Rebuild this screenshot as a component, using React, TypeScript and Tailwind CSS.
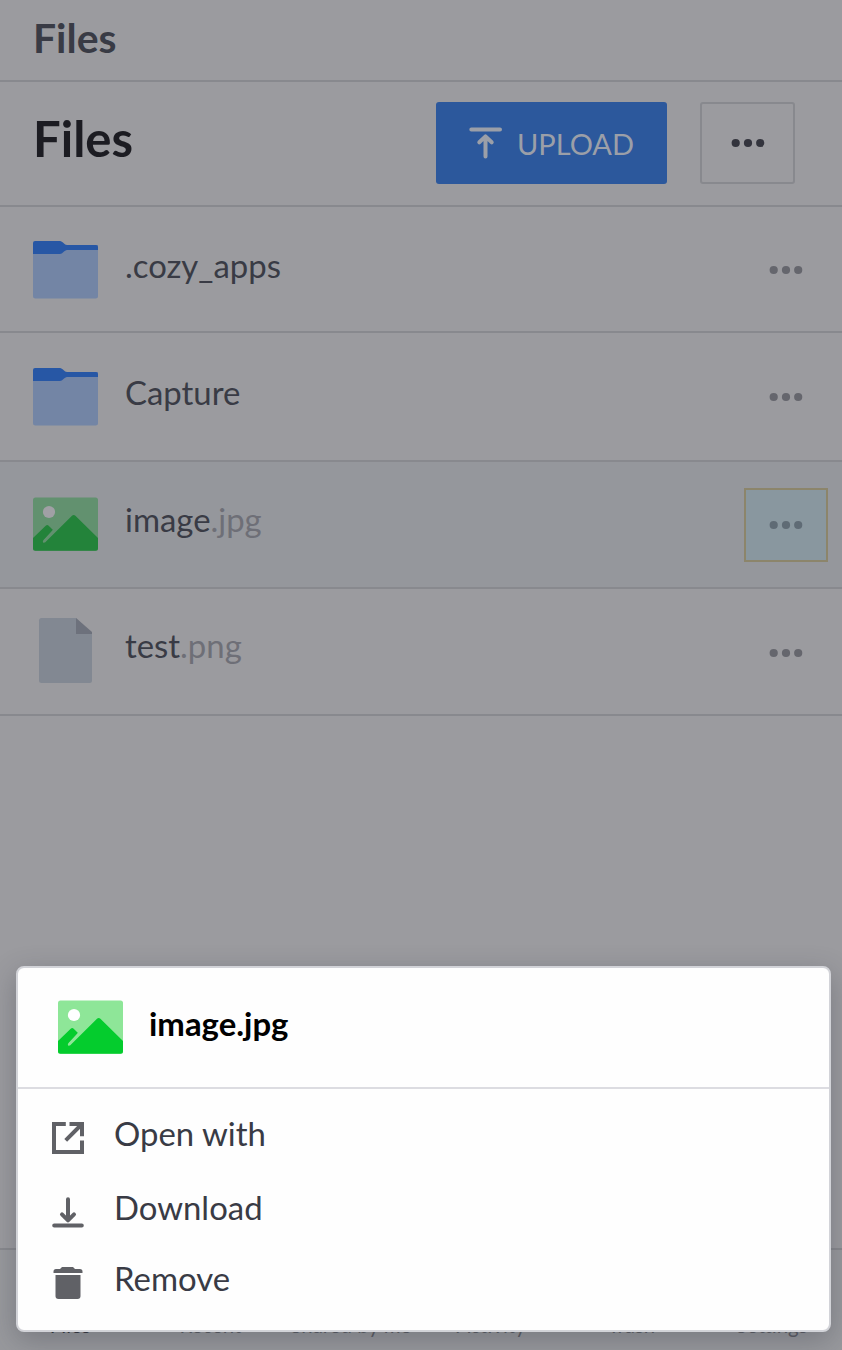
import React from "react";

function Dots({ className }: { className: string }) {
  return (
    <svg width="34" height="10" viewBox="0 0 34 10" fill="currentColor" className={className}>
      <circle cx="4.7" cy="5" r="4.1" />
      <circle cx="17" cy="5" r="4.1" />
      <circle cx="29.2" cy="5" r="4.1" />
    </svg>
  );
}

function FolderIcon() {
  return (
    <svg width="66" height="66" viewBox="0 0 66 66">
      <path d="M0 8h65v51a2.5 2.5 0 0 1-2.5 2.5h-60A2.5 2.5 0 0 1 0 59z" fill="#7385a5" />
      <path d="M0 6a2 2 0 0 1 2-2h25c2.5 0 4.5 4 7 4h29a2 2 0 0 1 2 2v3H34c-2.5 0-4.500 4-7 4H0z" fill="#2757a5" />
    </svg>
  );
}

function ImageIcon({ muted = false }: { muted?: boolean }) {
  const sky = muted ? "#62916f" : "#8ee698";
  const hill = muted ? "#23833a" : "#04cc2d";
  return (
    <svg width="66" height="66" viewBox="0 0 66 66">
      <rect x="0" y="5.500" width="65" height="53.300" rx="2.500" fill={sky} />
      <circle cx="16" cy="20" r="6.100" fill={muted ? "#a0a0a5" : "#ffffff"} />
      <path
        d="M0 46 12.700 33.700Q14.200 32.200 15.700 33.700L20 37.900 10.500 48Q9.600 50 12 50.500L39 23.700Q40.700 22.200 42.400 23.700L65 46V56.300A2.500 2.500 0 0 1 62.500 58.800H2.500A2.500 2.500 0 0 1 0 56.300z"
        fill={hill}
      />
      <path d="M21.500 37.700 10.800 49.700" stroke={sky} strokeWidth="1.900" strokeLinecap="round" />
    </svg>
  );
}

function FileIcon() {
  return (
    <svg width="66" height="66" viewBox="0 0 66 66">
      <path d="M8.500 0H43L59 16V62.500a2.500 2.500 0 0 1-2.500 2.500h-48A2.500 2.500 0 0 1 6 62.500V2.500A2.500 2.500 0 0 1 8.500 0z" fill="#828892" />
      <path d="M43 0 59 14v2H43z" fill="#6d717c" />
    </svg>
  );
}

function UploadIcon() {
  return (
    <svg width="33" height="32" viewBox="0 0 33 32" fill="none" stroke="#9b9fa8" strokeWidth="4" strokeLinecap="round" strokeLinejoin="round">
      <path d="M2.300 2.500h28.700M16.500 29.500V10M10.300 15.300 16.500 9.400l6.200 5.900" />
    </svg>
  );
}

function OpenIcon() {
  return (
    <svg width="32" height="32" viewBox="0 0 32 32" fill="none" stroke="#606166" strokeWidth="4">
      <path d="M13.800 2H2v28h28V18.500" />
      <path d="M17.500 2H30v12.200M29 3 13.700 18.300" />
    </svg>
  );
}

function DownloadIcon() {
  return (
    <svg width="32" height="32" viewBox="0 0 32 32" fill="none" stroke="#606166" strokeWidth="4" strokeLinecap="round" strokeLinejoin="round">
      <path d="M2.200 29.500h27.600M16 3.200v20M10 18.300l6 6 6-6" />
    </svg>
  );
}

function TrashIcon() {
  return (
    <svg width="32" height="32" viewBox="0 0 32 32" fill="#606166">
      <path d="M1.500 6V4.500A2.500 2.500 0 0 1 4 2h4L10 0h11l2 2h4.500A2.500 2.500 0 0 1 30.500 4.500V6z" />
      <path d="M3.500 8h25v21a3 3 0 0 1-3 3h-19a3 3 0 0 1-3-3z" />
    </svg>
  );
}

const files = [
  { name: ".cozy_apps", ext: "", icon: <FolderIcon />, row: "h-[126px] pt-px", label: "pb-[6px]", more: "" },
  { name: "Capture", ext: "", icon: <FolderIcon />, row: "h-[129px]", label: "pb-[7px]", more: "" },
  { name: "image", ext: ".jpg", icon: <ImageIcon muted />, row: "h-[127px] bg-[#95979c]", label: "pb-[8px]", more: "pt-px", active: true },
  { name: "test", ext: ".png", icon: <FileIcon />, row: "h-[127px] pb-px", label: "pb-[9px]", more: "pt-[3px]" },
];

const actions = [
  { label: "Open with", icon: <OpenIcon />, box: "h-[74px]", text: "pb-[8px]" },
  { label: "Download", icon: <DownloadIcon />, box: "h-[73px]", text: "pb-[6px]" },
  { label: "Remove", icon: <TrashIcon />, box: "h-[70px]", text: "pb-[8px]" },
];

const tabs = ["Files", "Recent", "Shared by me", "Activity", "Trash", "Settings"];

export default function App() {
  return (
    <div className="relative flex h-[1350px] w-[842px] flex-col overflow-hidden bg-[#9b9b9f] font-['Lato',sans-serif] text-[#393b45]">
      <header className="flex h-[82px] shrink-0 items-center border-b-2 border-[#88898e] pb-[4px] pl-[33px]">
        <span className="text-[40.900px] font-bold leading-none">Files</span>
      </header>

      <div className="flex h-[125px] shrink-0 items-center border-b-2 border-[#88898e] pb-[2px] pl-[33px] pr-[47px]">
        <h1 className="flex-1 pb-[8px] text-[49px] font-bold leading-none text-[#1c1c22]">Files</h1>
        <button className="flex h-[82px] w-[231px] items-center rounded-[3px] bg-[#2c589c] pl-[33px] text-[29px] leading-none text-[#9b9fa8]">
          <UploadIcon />
          <span className="pl-[15px] pt-px">UPLOAD</span>
        </button>
        <button className="ml-[33px] flex h-[82px] w-[95px] items-center justify-center rounded-[3px] border-2 border-[#88898e]">
          <Dots className="text-[#33343d]" />
        </button>
      </div>

      {files.map((f) => (
        <div key={f.name} className={`flex shrink-0 items-center border-b-2 border-[#88898e] pl-[33px] pr-[14px] ${f.row}`}>
          {f.icon}
          <span className={`flex-1 pl-[26px] text-[32.900px] leading-none ${f.label}`}>
            {f.name}
            <span className="text-[#6e6f77]">{f.ext}</span>
          </span>
          <span className={`flex h-[74px] w-[84px] items-center justify-center border-2 ${f.more} ${f.active ? "border-[#8c856b] bg-[#89979f] text-[#5f6b75]" : "border-transparent text-[#65666d]"}`}>
            <Dots className="" />
          </span>
        </div>
      ))}

      <nav className="mt-auto flex h-[102px] shrink-0 items-end border-t-2 border-[#88898e] bg-[#98999d] pb-[13px] text-[20.400px] leading-[24px] text-[#5b5c64]">
        {tabs.map((t) => (
          <span key={t} className={`w-1/6 whitespace-nowrap text-center ${t === "Files" ? "text-[#33343d]" : ""}`}>
            {t}
          </span>
        ))}
      </nav>

      <div className="absolute bottom-[18px] left-[16px] flex h-[366px] w-[815px] flex-col rounded-[8px] border-2 border-[#d2d3d8] bg-[#fefefe] shadow-[0_8px_28px_rgba(50,52,66,0.32)]">
        <div className="flex h-[121px] shrink-0 items-center border-b-2 border-[#dcdce1] pl-[40px]">
          <ImageIcon />
          <span className="pb-[7px] pl-[25px] text-[32.900px] font-bold leading-none text-black">image.jpg</span>
        </div>
        <div className="flex flex-col pl-[34px] pt-[12px]">
          {actions.map((a) => (
            <div key={a.label} className={`flex items-center ${a.box}`}>
              {a.icon}
              <span className={`pl-[30px] text-[32.900px] leading-none ${a.text}`}>{a.label}</span>
            </div>
          ))}
        </div>
      </div>
    </div>
  );
}
